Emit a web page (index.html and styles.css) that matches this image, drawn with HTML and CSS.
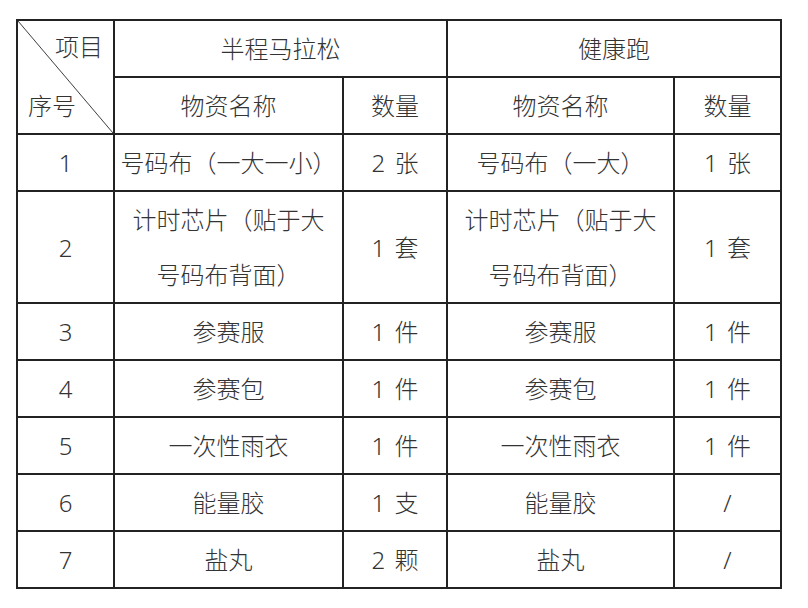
FILE: index.html
```html
<!DOCTYPE html>
<html lang="zh">
<head>
<meta charset="utf-8">
<link rel="stylesheet" href="styles.css">
</head>
<body>
<div class="page">
<table class="kit">
  <colgroup>
    <col class="c-no">
    <col class="c-name">
    <col class="c-qty">
    <col class="c-name2">
    <col class="c-qty2">
  </colgroup>
  <tr>
    <td class="diag" rowspan="2">
      <div class="diag-inner">
        <span class="d-top">项目</span>
        <span class="d-bot">序号</span>
      </div>
    </td>
    <td colspan="2">半程马拉松</td>
    <td colspan="2">健康跑</td>
  </tr>
  <tr>
    <td>物资名称</td>
    <td>数量</td>
    <td>物资名称</td>
    <td>数量</td>
  </tr>
  <tr>
    <td>1</td>
    <td>号码布（一大一小）</td>
    <td class="qty">2 张</td>
    <td>号码布（一大）</td>
    <td class="qty">1 张</td>
  </tr>
  <tr class="tall">
    <td>2</td>
    <td>计时芯片（贴于大<br>号码布背面）</td>
    <td class="qty">1 套</td>
    <td>计时芯片（贴于大<br>号码布背面）</td>
    <td class="qty">1 套</td>
  </tr>
  <tr>
    <td>3</td>
    <td>参赛服</td>
    <td class="qty">1 件</td>
    <td>参赛服</td>
    <td class="qty">1 件</td>
  </tr>
  <tr>
    <td>4</td>
    <td>参赛包</td>
    <td class="qty">1 件</td>
    <td>参赛包</td>
    <td class="qty">1 件</td>
  </tr>
  <tr>
    <td>5</td>
    <td>一次性雨衣</td>
    <td class="qty">1 件</td>
    <td>一次性雨衣</td>
    <td class="qty">1 件</td>
  </tr>
  <tr>
    <td>6</td>
    <td>能量胶</td>
    <td class="qty">1 支</td>
    <td>能量胶</td>
    <td>/</td>
  </tr>
  <tr>
    <td>7</td>
    <td>盐丸</td>
    <td class="qty">2 颗</td>
    <td>盐丸</td>
    <td>/</td>
  </tr>
</table>
</div>
</body>
</html>
```

FILE: styles.css
```css
html, body {
  margin: 0;
  padding: 0;
  background: #fff;
}

.page {
  padding: 19px 0 0 16px;
}

.kit {
  border-collapse: collapse;
  table-layout: fixed;
  width: 766px;
  font-family: "Noto Sans", "Noto Sans CJK SC", sans-serif;
  font-weight: 300;
  font-size: 24px;
  color: #333;
}

.c-no { width: 97px; }
.c-name { width: 229px; }
.c-qty { width: 104px; }
.c-name2 { width: 227px; }
.c-qty2 { width: 107px; }

.kit td {
  border: 2px solid #222;
  height: 55px;
  padding: 0 2px;
  text-align: center;
  vertical-align: middle;
  line-height: 55px;
  white-space: nowrap;
}

.kit td.qty {
  word-spacing: 3px;
}

.kit tr.tall td {
  height: 110px;
}

.kit td.diag {
  padding: 0;
  background: linear-gradient(to top right, transparent calc(50% - 0.8px), #444 50%, transparent calc(50% + 0.8px));
}

.diag-inner {
  display: flex;
  flex-direction: column;
  justify-content: space-between;
  height: 112px;
  line-height: 1;
}

.d-top {
  align-self: flex-end;
  padding: 14px 10px 0 0;
}

.d-bot {
  align-self: flex-start;
  padding: 0 0 15px 10px;
}
```
